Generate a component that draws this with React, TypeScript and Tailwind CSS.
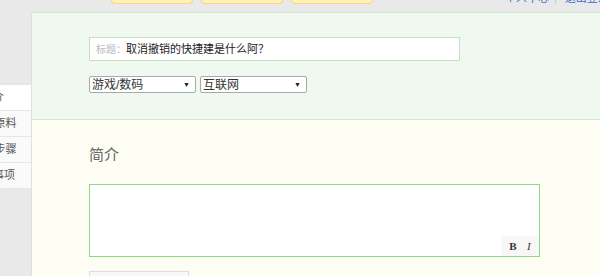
import React from "react"

const cjk = { fontFamily: '"Liberation Sans", "Noto Sans CJK SC", sans-serif' }

const sideItems = ["简介", "工具/原料", "方法/步骤", "注意事项"]

export default function App() {
  return (
    <div className="w-[600px] h-[276px] overflow-hidden bg-[#e9e9e9] flex flex-col" style={cjk}>
      <TopStrip />
      <div className="flex flex-1 min-h-0">
        <SideNav />
        <main className="flex-1 flex flex-col border-t border-l border-[#d7e7d3] min-w-0">
          <section className="bg-[#f0f9ef] border-b border-[#d6e6d2] pl-[57px] pt-[24px] pb-[26px]">
            <div className="w-[371px] h-[24px] bg-white border border-[#cadcc6] flex items-center pl-[6px]">
              <span className="text-[10px] text-[#bbbbbb]">标题：</span>
              <span className="text-[11px] text-[#222]">取消撤销的快捷建是什么阿？</span>
            </div>
            <div className="flex gap-[4px] mt-[15px]">
              <FakeSelect label="游戏/数码" />
              <FakeSelect label="互联网" />
            </div>
          </section>

          <section className="flex-1 bg-[#fdfdf3] pl-[57px] pt-[25px]">
            <h2 className="text-[15px] leading-[20px] text-[#666]">简介</h2>
            <div className="mt-[19px] w-[451px] h-[73px] bg-white border border-[#8fd884] flex items-end justify-end">
              <div className="w-[38px] h-[20px] bg-[#f7f7f7] flex items-center justify-around px-[3px] text-[11px] text-[#333]" style={{ fontFamily: '"Liberation Serif", serif' }}>
                <span className="font-bold">B</span>
                <span className="italic">I</span>
              </div>
            </div>
            <div className="mt-[14px] w-[100px] h-[20px] bg-[#f8f8f8] border border-[#dddddd]" />
          </section>
        </main>
      </div>
    </div>
  )
}

function TopStrip() {
  return (
    <div className="h-[12px] flex items-start shrink-0">
      <div className="flex gap-[8px] ml-[111px]">
        <div className="w-[82px] h-[4px] bg-[#fff1b8] border border-t-0 border-[#f6d680] rounded-b-[4px]" />
        <div className="w-[82px] h-[4px] bg-[#fff1b8] border border-t-0 border-[#f6d680] rounded-b-[4px]" />
        <div className="w-[82px] h-[4px] bg-[#fff1b8] border border-t-0 border-[#f6d680] rounded-b-[4px]" />
      </div>
      <div className="ml-auto w-[95px] h-[4px] overflow-hidden flex items-end gap-[5px] text-[11px] leading-none text-[#3a6fd0] whitespace-nowrap">
        <span>个人中心</span>
        <span className="text-[#cccccc]">|</span>
        <span className="ml-[3px]">退出登录</span>
      </div>
    </div>
  )
}

function SideNav() {
  return (
    <div className="w-[31px] shrink-0 pt-[72px] overflow-hidden">
      <div className="border-r border-[#dcdcdc] shadow-[1px_0_2px_rgba(0,0,0,0.05)]">
        {sideItems.map((t, i) => (
          <div
            key={t}
            className={"h-[26px] -ml-[51px] w-[88px] flex items-center justify-center text-[11px] text-[#555] border-t border-[#e6e6e6] " + (i === 0 ? "bg-white" : "bg-[#fafafa]")}
          >
            {t}
          </div>
        ))}
      </div>
    </div>
  )
}

function FakeSelect({ label }: { label: string }) {
  return (
    <div className="w-[107px] h-[17px] bg-white border border-[#a9a9a9] rounded-[2px] flex items-center justify-between pl-[2px] pr-[5px]">
      <span className="text-[12px] leading-none text-[#333]">{label}</span>
      <span className="text-[7px] leading-none text-[#222]">▼</span>
    </div>
  )
}
